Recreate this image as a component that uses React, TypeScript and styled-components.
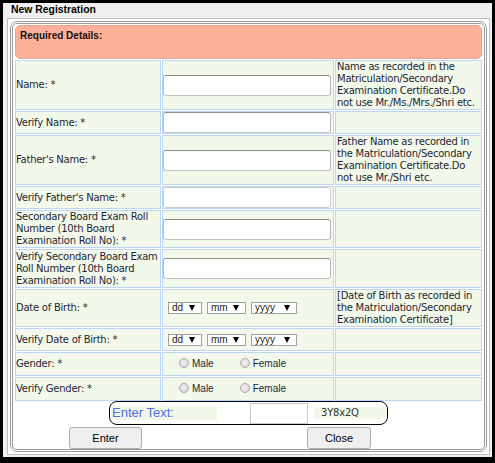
import React from 'react';
import styled, { createGlobalStyle } from 'styled-components';

const Global = createGlobalStyle`
  html, body { margin: 0; padding: 0; background: #000; }
  body { width: 495px; height: 463px; overflow: hidden; }
`;

const Window = styled.div`
  box-sizing: border-box;
  width: 495px;
  height: 463px;
  border-style: solid;
  border-color: #000;
  border-width: 3px 3px 6px 3px;
  background: #f0f0f0;
  display: flex;
  flex-direction: column;
`;

const TitleBar = styled.div`
  height: 15px;
  box-sizing: border-box;
  padding: 0 0 2px 8px;
  font: bold 10.4px/13px "Liberation Sans", Arial, sans-serif;
  color: #000;
`;

const Panel = styled.div`
  margin: 0 2px 2px 4px;
  border: 1px solid #bdbdbd;
  background: #fff;
  padding: 2px;
`;

const Fieldset = styled.div`
  border: 3px double #9a9a9a;
  border-radius: 7px;
  padding: 0 1px;
`;

const FormGrid = styled.div`
  display: grid;
  grid-template-columns: 146px 172px 147px;
  grid-template-rows: 34px 50px 23px 50px 23px 38px 39px 38px 23px 24px 24px;
  gap: 1px;
  padding: 1px 1px 0 1px;
`;

const Header = styled.div`
  grid-column: 1 / -1;
  box-sizing: border-box;
  background: #ffb098;
  border: 1px solid #e9a48e;
  border-radius: 5px;
  padding: 4px 4px;
  font: bold 10px/12px "Liberation Sans", Arial, sans-serif;
  color: #111;
`;

const Cell = styled.div<{ $pad?: number }>`
  box-sizing: border-box;
  border: 1px solid #bcd4f6;
  background: #f2f9ea;
  display: flex;
  align-items: center;
  padding-left: ${(p) => p.$pad ?? 0}px;
  font-family: "DejaVu Sans", Verdana, sans-serif;
  font-size: 10px;
  line-height: 12px;
  letter-spacing: -0.25px;
  color: #1f1f33;
  white-space: nowrap;
  overflow: hidden;
`;

const TextInput = styled.input<{ $light?: boolean }>`
  box-sizing: border-box;
  width: 168px;
  height: 21px;
  margin: 0;
  padding: 0 3px;
  border: 1px solid;
  border-color: ${(p) => (p.$light ? '#cacaca' : '#8d8d8d #b8b8b8 #c4c4c4 #b8b8b8')};
  border-radius: 3px;
  background: #fff;
  outline: none;
`;

const SelectRow = styled.div`
  display: flex;
  align-items: center;
  gap: 5px;
  padding-left: 5px;
`;

const FakeSelect = styled.div<{ $w: number }>`
  box-sizing: border-box;
  width: ${(p) => p.$w}px;
  height: 12px;
  border: 1px solid #a0a0a0;
  background: #fff;
  display: flex;
  align-items: center;
  justify-content: space-between;
  padding: 0 6px 0 3px;
  font: 10px/10px "Liberation Sans", Arial, sans-serif;
  letter-spacing: 0;
  color: #222;
`;

const Arrow = styled.span`
  width: 0;
  height: 0;
  border-left: 3px solid transparent;
  border-right: 3px solid transparent;
  border-top: 6px solid #000;
`;

const RadioGroup = styled.div`
  display: flex;
  align-items: center;
  padding-left: 16px;
  font: 10px/12px "Liberation Sans", Arial, sans-serif;
  letter-spacing: 0;
  color: #1f1f3a;
`;

const RadioOption = styled.label`
  display: flex;
  align-items: center;
  gap: 3px;
  & + & {
    margin-left: 26px;
  }
`;

const RadioDot = styled.span`
  width: 10px;
  height: 10px;
  box-sizing: border-box;
  border-radius: 50%;
  border: 1px solid #a8a8a8;
  background: radial-gradient(circle at 45% 40%, #f2f2f2, #d2d2d2);
  margin-bottom: 3px;
`;

const CaptchaRow = styled.div`
  display: flex;
  justify-content: center;
`;

const CaptchaBox = styled.div`
  box-sizing: border-box;
  width: 279px;
  height: 24px;
  border: 1px solid #000;
  border-radius: 8px;
  display: flex;
  align-items: center;
`;

const CaptchaLabel = styled.span`
  box-sizing: border-box;
  margin-left: 1px;
  width: 106px;
  height: 14px;
  padding-left: 1px;
  background: #f2f9ea;
  color: #5469e4;
  font: 13px/14px "Liberation Sans", Arial, sans-serif;
`;

const CaptchaInput = styled.input`
  box-sizing: border-box;
  margin: 0 0 0 33px;
  width: 58px;
  height: 21px;
  border: 1px solid #c8c8c8;
  padding: 0 2px;
  background: #fff;
  outline: none;
`;

const CaptchaCode = styled.span`
  box-sizing: border-box;
  margin-left: 6px;
  width: 73px;
  height: 12px;
  padding-left: 7px;
  background: #f2f9ea;
  font: 10px/12px "DejaVu Sans", Verdana, sans-serif;
  letter-spacing: -0.2px;
  color: #333;
`;

const ButtonRow = styled.div`
  display: flex;
  margin-top: 2px;
  padding-left: 55px;
  gap: 165px;
`;

const Button = styled.button<{ $w: number }>`
  box-sizing: border-box;
  width: ${(p) => p.$w}px;
  height: 22px;
  padding: 0;
  border: 1px solid #adadad;
  border-radius: 3px;
  background: #efefef;
  font: 11px "Liberation Sans", Arial, sans-serif;
  color: #000;
`;

const Lines = ({ lines }: { lines: string[] }) => (
  <div>
    {lines.map((l, i) => (
      <React.Fragment key={i}>
        {l}
        {i < lines.length - 1 && <br />}
      </React.Fragment>
    ))}
  </div>
);

const DateSelects = () => (
  <SelectRow>
    <FakeSelect $w={34}>
      dd<Arrow />
    </FakeSelect>
    <FakeSelect $w={39}>
      mm<Arrow />
    </FakeSelect>
    <FakeSelect $w={46}>
      yyyy<Arrow />
    </FakeSelect>
  </SelectRow>
);

const Gender = () => (
  <RadioGroup>
    <RadioOption>
      <RadioDot />
      Male
    </RadioOption>
    <RadioOption>
      <RadioDot />
      Female
    </RadioOption>
  </RadioGroup>
);

export default function App() {
  return (
    <>
      <Global />
      <Window>
        <TitleBar>New Registration</TitleBar>
        <Panel>
          <Fieldset>
            <FormGrid>
              <Header>Required Details:</Header>

              <Cell>Name: *</Cell>
              <Cell>
                <TextInput />
              </Cell>
              <Cell $pad={1}>
                <Lines
                  lines={[
                    'Name as recorded in the',
                    'Matriculation/Secondary',
                    'Examination Certificate.Do',
                    'not use Mr./Ms./Mrs./Shri etc.',
                  ]}
                />
              </Cell>

              <Cell>Verify Name: *</Cell>
              <Cell>
                <TextInput />
              </Cell>
              <Cell />

              <Cell>Father's Name: *</Cell>
              <Cell>
                <TextInput />
              </Cell>
              <Cell $pad={1}>
                <Lines
                  lines={[
                    'Father Name as recorded in',
                    'the Matriculation/Secondary',
                    'Examination Certificate.Do',
                    'not use Mr./Shri etc.',
                  ]}
                />
              </Cell>

              <Cell>Verify Father's Name: *</Cell>
              <Cell>
                <TextInput $light />
              </Cell>
              <Cell />

              <Cell>
                <Lines
                  lines={['Secondary Board Exam Roll', 'Number (10th Board', 'Examination Roll No): *']}
                />
              </Cell>
              <Cell>
                <TextInput />
              </Cell>
              <Cell />

              <Cell>
                <Lines
                  lines={['Verify Secondary Board Exam', 'Roll Number (10th Board', 'Examination Roll No): *']}
                />
              </Cell>
              <Cell>
                <TextInput />
              </Cell>
              <Cell />

              <Cell>Date of Birth: *</Cell>
              <Cell>
                <DateSelects />
              </Cell>
              <Cell $pad={1}>
                <Lines
                  lines={[
                    '[Date of Birth as recorded in',
                    'the Matriculation/Secondary',
                    'Examination Certificate]',
                  ]}
                />
              </Cell>

              <Cell>Verify Date of Birth: *</Cell>
              <Cell>
                <DateSelects />
              </Cell>
              <Cell />

              <Cell>Gender: *</Cell>
              <Cell>
                <Gender />
              </Cell>
              <Cell />

              <Cell>Verify Gender: *</Cell>
              <Cell>
                <Gender />
              </Cell>
              <Cell />
            </FormGrid>

            <CaptchaRow>
              <CaptchaBox>
                <CaptchaLabel>Enter Text:</CaptchaLabel>
                <CaptchaInput />
                <CaptchaCode>3Y8x2Q</CaptchaCode>
              </CaptchaBox>
            </CaptchaRow>

            <ButtonRow>
              <Button $w={73}>Enter</Button>
              <Button $w={64}>Close</Button>
            </ButtonRow>
          </Fieldset>
        </Panel>
      </Window>
    </>
  );
}
